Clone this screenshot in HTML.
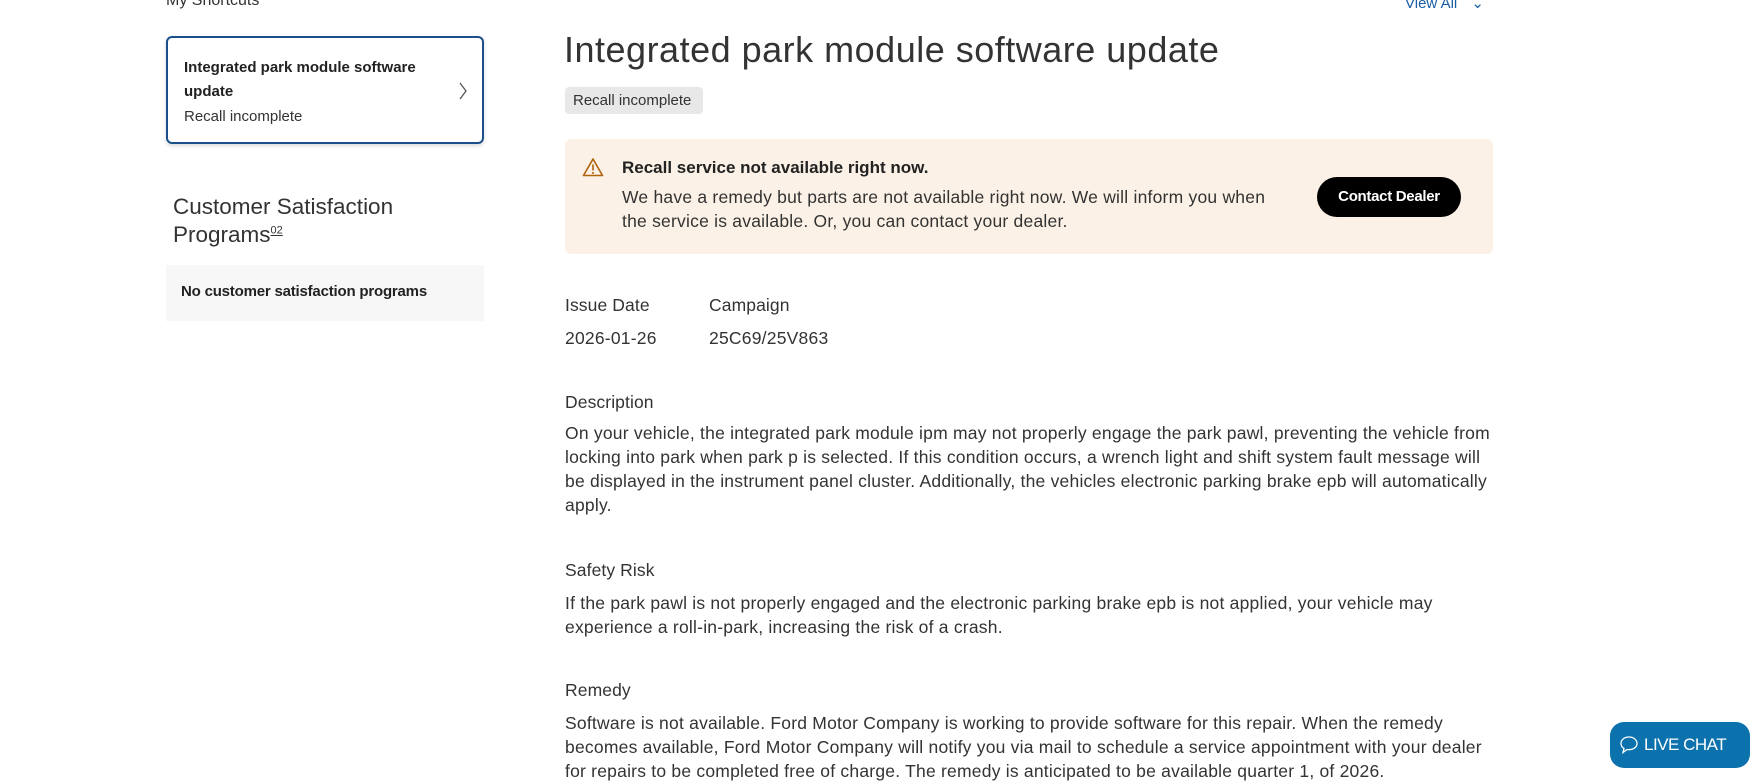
<!DOCTYPE html>
<html><head><meta charset="utf-8"><style>
*{margin:0;padding:0;box-sizing:border-box}
body{width:1754px;height:782px;overflow:hidden;background:#fff;font-family:"Liberation Sans",sans-serif;color:#333;position:relative}
.a{position:absolute;white-space:nowrap}
.p{font-size:17.5px;line-height:24px;letter-spacing:0.22px}
h4{font-size:17.5px;font-weight:normal;color:#333;letter-spacing:0.1px}
</style></head><body>
<div class="a" style="left:166px;top:-8px;font-size:16px;color:#333">My Shortcuts</div>
<div class="a" style="left:1405px;top:-6px;font-size:15px;color:#1a5fa6">View All <span style="margin-left:10px">⌄</span></div>

<div class="a" style="left:166px;top:36px;width:318px;height:108px;border:2px solid #1a4f8a;border-radius:6px;box-shadow:0 2px 4px rgba(0,0,0,.15)">
 <div class="a" style="left:16px;top:18px;font-size:15px;line-height:24px;color:#222;font-weight:bold;letter-spacing:0px">Integrated park module software<br>update</div>
 <div class="a" style="left:16px;top:70px;font-size:15px;color:#333;letter-spacing:0px">Recall incomplete</div>
 <svg class="a" style="left:290px;top:44px" width="10" height="18"><path d="M2 1l6 8-6 8" fill="none" stroke="#555" stroke-width="1.3"/></svg>
</div>

<div class="a" style="left:173px;top:193px;font-size:22.5px;line-height:28px;color:#333;white-space:normal;width:320px">Customer Satisfaction Programs<sup style="font-size:11px;text-decoration:underline;line-height:0">02</sup></div>
<div class="a" style="left:166px;top:265px;width:318px;height:56px;background:#f7f7f7"></div>
<div class="a" style="left:181px;top:283px;font-size:15px;font-weight:bold;color:#222;letter-spacing:-.2px">No customer satisfaction programs</div>

<div class="a" style="left:564px;top:29px;font-size:36px;color:#333;letter-spacing:0.5px">Integrated park module software update</div>
<div class="a" style="left:565px;top:87px;width:138px;height:27px;background:#e8e8e8;border-radius:4px;font-size:15px;line-height:27px;padding-left:8px;color:#333">Recall incomplete</div>

<div class="a" style="left:565px;top:139px;width:928px;height:115px;background:#fbf1e6;border-radius:6px"></div>
<svg class="a" style="left:582px;top:157px" width="22" height="20"><path d="M11 2L1.5 18.5h19z" fill="none" stroke="#b0620d" stroke-width="1.6" stroke-linejoin="round"/><path d="M11 7.5v6" stroke="#b0620d" stroke-width="1.6"/><circle cx="11" cy="16" r="1" fill="#b0620d"/></svg>
<div class="a" style="left:622px;top:158px;font-size:17px;font-weight:bold;color:#222;letter-spacing:0px">Recall service not available right now.</div>
<div class="a p" style="left:622px;top:185px">We have a remedy but parts are not available right now. We will inform you when<br>the service is available. Or, you can contact your dealer.</div>
<div class="a" style="left:1317px;top:177px;width:144px;height:40px;background:#000;border-radius:20px;color:#fff;font-size:15px;font-weight:bold;text-align:center;line-height:40px;letter-spacing:-.3px">Contact Dealer</div>

<h4 class="a" style="left:565px;top:295px">Issue Date</h4>
<h4 class="a" style="left:709px;top:295px">Campaign</h4>
<div class="a p" style="left:565px;top:326px">2026-01-26</div>
<div class="a p" style="left:709px;top:326px">25C69/25V863</div>

<h4 class="a" style="left:565px;top:392px">Description</h4>
<div class="a p" style="left:565px;top:421px">On your vehicle, the integrated park module ipm may not properly engage the park pawl, preventing the vehicle from<br>locking into park when park p is selected. If this condition occurs, a wrench light and shift system fault message will<br>be displayed in the instrument panel cluster. Additionally, the vehicles electronic parking brake epb will automatically<br>apply.</div>

<h4 class="a" style="left:565px;top:560px">Safety Risk</h4>
<div class="a p" style="left:565px;top:591px">If the park pawl is not properly engaged and the electronic parking brake epb is not applied, your vehicle may<br>experience a roll-in-park, increasing the risk of a crash.</div>

<h4 class="a" style="left:565px;top:680px">Remedy</h4>
<div class="a p" style="left:565px;top:711px">Software is not available. Ford Motor Company is working to provide software for this repair. When the remedy<br>becomes available, Ford Motor Company will notify you via mail to schedule a service appointment with your dealer<br>for repairs to be completed free of charge. The remedy is anticipated to be available quarter 1, of 2026.</div>

<div class="a" style="left:1610px;top:722px;width:140px;height:46px;background:#0b72ad;border-radius:14px;color:#fff;font-size:17px;line-height:46px;padding-left:34px;letter-spacing:-.5px">LIVE CHAT</div>
<svg class="a" style="left:1619px;top:735px" width="20" height="20"><path d="M10 2C5 2 2 5 2 8.5c0 2.3 1.3 4 3 5l-1 4 4-3c.7.1 1.3.2 2 .2 5 0 8-3 8-6.2S15 2 10 2z" fill="none" stroke="#fff" stroke-width="1.3"/></svg>
</body></html>
